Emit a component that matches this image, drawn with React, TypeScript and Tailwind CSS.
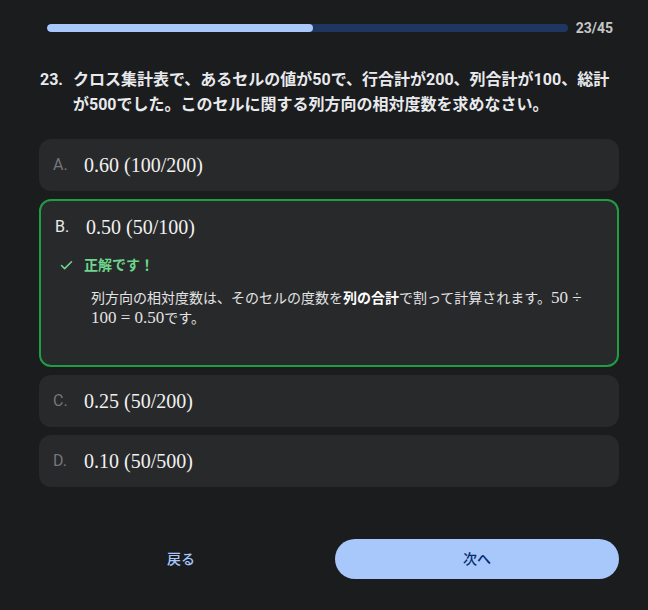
import { Check } from 'lucide-react';

const sans = "font-['Roboto','Noto_Sans_CJK_JP',sans-serif]";
const serif = "font-['Liberation_Serif','DejaVu_Serif',serif]";

const options = [
  { key: 'A', value: '0.60 (100/200)' },
  { key: 'B', value: '0.50 (50/100)' },
  { key: 'C', value: '0.25 (50/200)' },
  { key: 'D', value: '0.10 (50/500)' },
];

export default function App() {
  const current = 23;
  const total = 45;
  const correct = 'B';

  return (
    <div className={`min-h-[610px] bg-[#1b1c1e] pt-[21px] pl-[39px] pr-[29px] ${sans}`}>
      {/* progress */}
      <div className="flex items-center gap-2 pl-2 pr-[6px]">
        <div className="h-2 flex-1 rounded-full bg-[#1f3760] overflow-hidden">
          <div className="h-full rounded-full bg-[#a8c7fa]" style={{ width: `${(current / total) * 100}%` }} />
        </div>
        <span className="text-[14px] font-bold leading-none text-[#c4c7c5]">
          {current}/{total}
        </span>
      </div>

      {/* question */}
      <div className="mt-8 flex pl-px text-[16px] font-bold leading-[25px] text-[#e8eaed]">
        <span className="w-[33px] shrink-0">{current}.</span>
        <p>
          クロス集計表で、あるセルの値が50で、行合計が200、列合計が100、総計が500でした。このセルに関する列方向の相対度数を求めなさい。
        </p>
      </div>

      {/* options */}
      <div className="mt-[22px] flex flex-col gap-2">
        {options.map((o) =>
          o.key === correct ? (
            <div key={o.key} className="rounded-xl border-2 border-[#1f9d44] bg-[#28292b] px-[14px] pt-4 pb-[37px]">
              <div className="flex items-center leading-5">
                <span className="w-[31px] text-[16px] text-[#e8eaed]">{o.key}.</span>
                <span className={`${serif} text-[20px] text-[#f1f1f1]`}>{o.value}</span>
              </div>
              <div className="mt-[18px] flex items-center leading-5 text-[14px] font-bold text-[#6dd58c]">
                <span className="w-[29px] pl-1">
                  <Check size={15} strokeWidth={2.5} />
                </span>
                <span>正解です！</span>
              </div>
              <p className="mt-[13px] pl-[36px] text-[14px] leading-5 text-[#e3e3e3]">
                列方向の相対度数は、そのセルの度数を<b className="font-bold text-white">列の合計</b>で割って計算されます。
                <span className={`${serif} text-[17px]`}>50 ÷</span>
                <br />
                <span className={`${serif} text-[17px]`}>100 = 0.50</span>です。
              </p>
            </div>
          ) : (
            <div key={o.key} className="flex items-center rounded-xl bg-[#28292b] px-[14px] py-4 leading-5">
              <span className="w-[31px] text-[16px] text-[#74777a]">{o.key}.</span>
              <span className={`${serif} text-[20px] text-[#f1f1f1]`}>{o.value}</span>
            </div>
          )
        )}
      </div>

      {/* nav */}
      <div className="mt-[52px] flex gap-3">
        <button className="h-10 flex-1 rounded-full text-[14px] font-medium text-[#a8c7fa]">戻る</button>
        <button className="h-10 flex-1 rounded-full bg-[#a8c7fa] text-[14px] font-medium text-[#062e6f]">次へ</button>
      </div>
    </div>
  );
}
